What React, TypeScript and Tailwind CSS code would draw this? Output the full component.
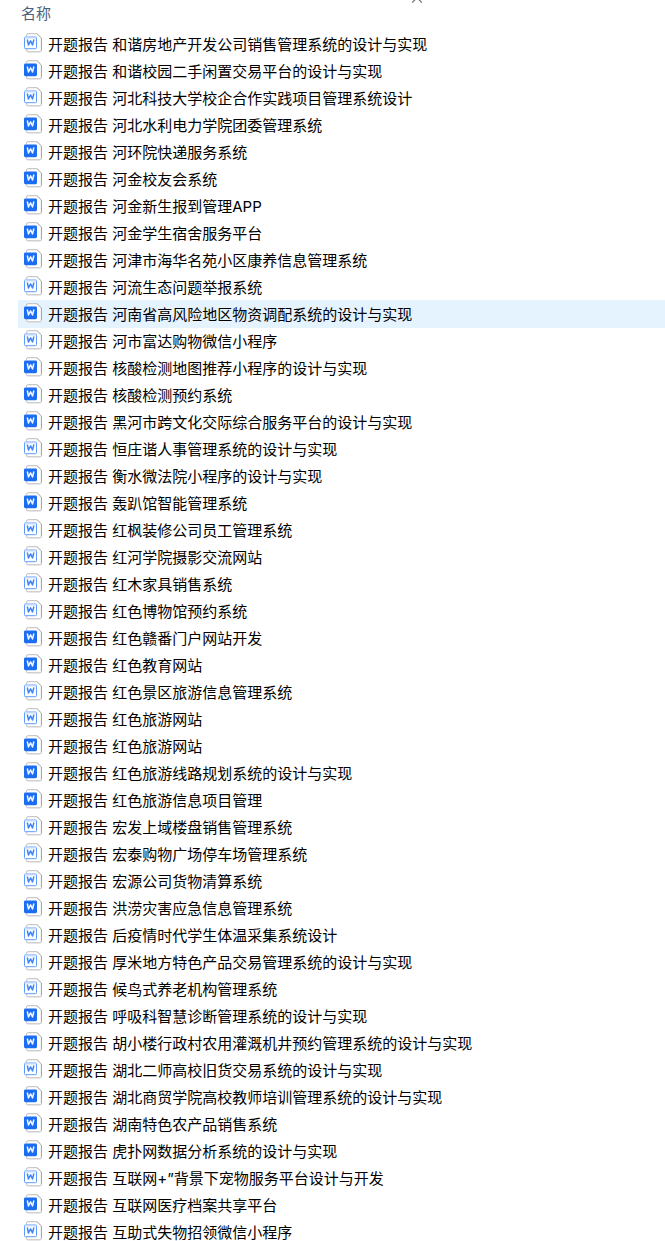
import React, { useState } from 'react';
import { ChevronUp } from 'lucide-react';

type DocKind = 'doc' | 'docx';

interface FileItem {
  kind: DocKind;
  name: string;
}

const FILES: FileItem[] = [
  { kind: 'doc', name: '和谐房地产开发公司销售管理系统的设计与实现' },
  { kind: 'docx', name: '和谐校园二手闲置交易平台的设计与实现' },
  { kind: 'doc', name: '河北科技大学校企合作实践项目管理系统设计' },
  { kind: 'docx', name: '河北水利电力学院团委管理系统' },
  { kind: 'docx', name: '河环院快递服务系统' },
  { kind: 'docx', name: '河金校友会系统' },
  { kind: 'docx', name: '河金新生报到管理APP' },
  { kind: 'docx', name: '河金学生宿舍服务平台' },
  { kind: 'docx', name: '河津市海华名苑小区康养信息管理系统' },
  { kind: 'doc', name: '河流生态问题举报系统' },
  { kind: 'docx', name: '河南省高风险地区物资调配系统的设计与实现' },
  { kind: 'doc', name: '河市富达购物微信小程序' },
  { kind: 'docx', name: '核酸检测地图推荐小程序的设计与实现' },
  { kind: 'docx', name: '核酸检测预约系统' },
  { kind: 'docx', name: '黑河市跨文化交际综合服务平台的设计与实现' },
  { kind: 'doc', name: '恒庄谐人事管理系统的设计与实现' },
  { kind: 'docx', name: '衡水微法院小程序的设计与实现' },
  { kind: 'docx', name: '轰趴馆智能管理系统' },
  { kind: 'doc', name: '红枫装修公司员工管理系统' },
  { kind: 'doc', name: '红河学院摄影交流网站' },
  { kind: 'doc', name: '红木家具销售系统' },
  { kind: 'doc', name: '红色博物馆预约系统' },
  { kind: 'docx', name: '红色赣番门户网站开发' },
  { kind: 'docx', name: '红色教育网站' },
  { kind: 'doc', name: '红色景区旅游信息管理系统' },
  { kind: 'doc', name: '红色旅游网站' },
  { kind: 'docx', name: '红色旅游网站' },
  { kind: 'docx', name: '红色旅游线路规划系统的设计与实现' },
  { kind: 'docx', name: '红色旅游信息项目管理' },
  { kind: 'doc', name: '宏发上域楼盘销售管理系统' },
  { kind: 'doc', name: '宏泰购物广场停车场管理系统' },
  { kind: 'doc', name: '宏源公司货物清算系统' },
  { kind: 'docx', name: '洪涝灾害应急信息管理系统' },
  { kind: 'doc', name: '后疫情时代学生体温采集系统设计' },
  { kind: 'doc', name: '厚米地方特色产品交易管理系统的设计与实现' },
  { kind: 'doc', name: '候鸟式养老机构管理系统' },
  { kind: 'docx', name: '呼吸科智慧诊断管理系统的设计与实现' },
  { kind: 'docx', name: '胡小楼行政村农用灌溉机井预约管理系统的设计与实现' },
  { kind: 'doc', name: '湖北二师高校旧货交易系统的设计与实现' },
  { kind: 'docx', name: '湖北商贸学院高校教师培训管理系统的设计与实现' },
  { kind: 'docx', name: '湖南特色农产品销售系统' },
  { kind: 'docx', name: '虎扑网数据分析系统的设计与实现' },
  { kind: 'doc', name: '互联网+”背景下宠物服务平台设计与开发' },
  { kind: 'docx', name: '互联网医疗档案共享平台' },
  { kind: 'doc', name: '互助式失物招领微信小程序' },
];

function DocIcon({ kind }: { kind: DocKind }): React.ReactElement {
  const filled = kind === 'docx';

  return (
    <svg
      width="18"
      height="20"
      viewBox="0 0 18 20"
      fill="none"
      className="mt-0.5 shrink-0"
      aria-hidden="true"
    >
      <path
        d="M2.5 3V2.2Q2.5 .6 4.1 .6H13L17.4 5V17.4Q17.4 19.2 15.6 19.2H4.3Q2.5 19.2 2.5 17.4Z"
        fill="#fff"
      />
      <path d="M2.5 3.2V2.2Q2.5 .7 4.1 .7H13" stroke="#bcbcbc" />
      <path d="M13 .7L17.4 5V17.4" stroke="#9c9c9c" />
      <path d="M17.4 17.2Q17.4 18.8 15.6 18.8H4.3Q2.5 18.8 2.5 17.2V16" stroke="#d0d0d0" strokeWidth="1.4" />
      {filled ? (
        <rect x="0" y="3.4" width="13" height="12.8" rx="1.4" fill="#1b6ef3" />
      ) : (
        <>
          <rect x=".5" y="3.9" width="12" height="11.8" rx="1" fill="#fff" stroke="#5c9bfd" />
          <path d="M.5 4.5H12.5" stroke="#c3d9ff" strokeWidth="2" />
        </>
      )}
      <path
        d="M3.3 6.5L4.5 12L6.6 7.8L8.5 12L9.9 6.5"
        stroke={filled ? '#f2f7ff' : '#3f86f7'}
        strokeWidth="1.5"
        strokeLinejoin="round"
      />
    </svg>
  );
}

function FileRow({
  file,
  active,
  onSelect,
}: {
  file: FileItem;
  active: boolean;
  onSelect(): void;
}): React.ReactElement {
  return (
    <li>
      <a
        href="#"
        onClick={(event) => {
          event.preventDefault();
          onSelect();
        }}
        className={`flex h-[27px] items-start gap-1.5 pl-1.5 whitespace-nowrap text-black ${
          active ? 'bg-[#e5f3ff] shadow-[0_-1px_#e5f3ff]' : ''
        }`}
      >
        <DocIcon kind={file.kind} />
        <span>开题报告 {file.name}</span>
      </a>
    </li>
  );
}

export default function App(): React.ReactElement {
  const [selected, setSelected] = useState<number>(10);

  return (
    <main className="w-full bg-white pl-[18px] font-[Inter,'Noto_Sans_CJK_SC',sans-serif] text-[15px] leading-[27px]">
      <div className="relative h-[31px]">
        <button type="button" className="block w-full pl-[3px] text-left text-[#4c607a]">
          名称
        </button>
        <ChevronUp
          className="absolute -top-[9px] left-[390px] h-[18px] w-[18px] text-gray-500"
          strokeWidth={1.5}
          aria-hidden="true"
        />
      </div>
      <ul>
        {FILES.map((file, index) => (
          <FileRow
            key={index}
            file={file}
            active={selected === index}
            onSelect={() => setSelected(index)}
          />
        ))}
      </ul>
    </main>
  );
}
